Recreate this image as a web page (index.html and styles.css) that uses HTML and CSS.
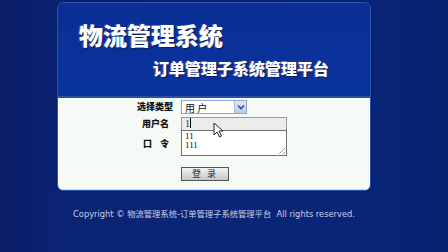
FILE: index.html
```html
<!DOCTYPE html>
<html lang="zh-CN">
<head>
    <meta charset="UTF-8">
    <title>物流管理系统 - 订单管理子系统管理平台</title>
    <link rel="stylesheet" href="styles.css">
</head>
<body>
    <div class="page">
        <div class="panel">
            <div class="banner">
                <div class="title">物流管理系统</div>
                <div class="subtitle">订单管理子系统管理平台</div>
            </div>

            <form class="login">
                <label class="label">选择类型</label>
                <div class="select">
                    <span class="select-text">用 户</span>
                    <span class="select-btn">
                        <svg width="8" height="6" viewBox="0 0 8 6"><path d="M1 1.5 L4 4.5 L7 1.5" fill="none" stroke="#2c4f98" stroke-width="1.6"/></svg>
                    </span>
                </div>

                <label class="label label-user">用户名</label>
                <div class="field">
                    <div class="input">1<span class="caret"></span></div>
                    <div class="suggest">
                        <div>11</div>
                        <div>111</div>
                        <span class="grip"></span>
                    </div>
                    <svg class="pointer" width="11" height="16" viewBox="0 0 11 16">
                        <path d="M1 1 L1 13 L4 10 L6.5 15 L8.5 14 L6 9 L10 9 Z" fill="#fff" stroke="#222" stroke-width="1"/>
                    </svg>
                </div>

                <label class="label label-pwd">口<span class="gap"></span>令</label>
                <div class="field-pwd"></div>

                <span></span>
                <button type="button" class="btn">登 录</button>
            </form>
        </div>

        <p class="copyright">Copyright © 物流管理系统-订单管理子系统管理平台&nbsp; All rights reserved.</p>
    </div>
</body>
</html>
```

FILE: styles.css
```css
* {
    margin: 0;
    padding: 0;
    box-sizing: border-box;
}

body {
    width: 448px;
    height: 252px;
    overflow: hidden;
    background: linear-gradient(90deg, #0a1d68 0%, #0b2474 14%, #0a2478 84%, #08226f 100%);
    font-family: "Noto Sans CJK SC", "DejaVu Sans", sans-serif;
}

.page {
    display: flex;
    flex-direction: column;
    align-items: center;
    padding-top: 2px;
}

.panel {
    width: 314px;
    margin-right: 20px;
    border: 1px solid #2e55b6;
    border-radius: 6px;
    overflow: hidden;
    box-shadow: 0 0 2px rgba(0,0,0,0.5);
}

.banner {
    height: 95px;
    background: linear-gradient(180deg, #0a2f97 0%, #0a339c 100%);
    border-bottom: 2px solid #2c4fa8;
    color: #fff;
    font-weight: 900;
    text-shadow: 1px 1px 1px #0a1d5a, -1px 0 1px #4d6fd0;
}

.title {
    font-size: 24px;
    line-height: 24px;
    padding: 20px 0 0 21px;
}

.subtitle {
    font-size: 16px;
    line-height: 16px;
    padding: 13px 0 0 95px;
}

.login {
    height: 92px;
    background: #f6faf7;
    display: grid;
    grid-template-columns: 117px 106px;
    grid-template-rows: 14px 14px 30px 14px;
    column-gap: 6px;
    row-gap: 3px;
    padding-top: 2px;
    border-bottom: 1px solid #d0d4d0;
}

.label {
    font-size: 9px;
    font-weight: 900;
    color: #111;
    text-align: right;
    line-height: 14px;
    padding-right: 2px;
}

.label-user {
    padding-right: 6px;
}

.label-pwd {
    align-self: start;
    margin-top: 3px;
    padding-right: 6px;
}

.label-pwd .gap {
    display: inline-block;
    width: 8px;
}

.select {
    width: 66px;
    height: 14px;
    border: 1px solid #8fa6cc;
    background: #fff;
    display: flex;
    align-items: center;
    justify-content: space-between;
}

.select-text {
    font-size: 10px;
    padding-left: 3px;
    color: #111;
}

.select-btn {
    width: 12px;
    height: 12px;
    background: linear-gradient(180deg, #dfe8f7, #b9cbea);
    border-left: 1px solid #a9bde0;
    display: flex;
    align-items: center;
    justify-content: center;
}

.field {
    position: relative;
}

.input {
    width: 106px;
    height: 14px;
    border: 1px solid #9a9a9a;
    background: #ececec;
    font-family: "Liberation Serif", serif;
    font-size: 10px;
    line-height: 12px;
    padding-left: 3px;
    color: #333;
}

.caret {
    display: inline-block;
    width: 1px;
    height: 10px;
    background: #000;
    vertical-align: -1px;
}

.suggest {
    position: absolute;
    left: 0;
    top: 13px;
    width: 106px;
    height: 26px;
    background: #fff;
    border: 1px solid #6f6f6f;
    font-family: "Liberation Serif", serif;
    font-size: 9px;
    line-height: 9px;
    padding: 1px 0 0 3px;
    color: #111;
    z-index: 2;
}

.grip {
    position: absolute;
    right: 1px;
    bottom: 1px;
    width: 9px;
    height: 9px;
    background: repeating-linear-gradient(135deg, transparent 0 2px, #9a9a9a 2px 3px);
    clip-path: polygon(100% 0, 100% 100%, 0 100%);
}

.pointer {
    position: absolute;
    left: 32px;
    top: 5px;
    z-index: 3;
}

.btn {
    grid-column: 2;
    width: 48px;
    height: 14px;
    border: 1px solid #555;
    background: linear-gradient(180deg, #f2f2f2, #c6c6c6);
    font-family: "Noto Sans CJK SC", sans-serif;
    font-size: 9px;
    line-height: 12px;
    color: #222;
    letter-spacing: 2px;
}

.copyright {
    margin-top: 16px;
    margin-right: 20px;
    font-family: "DejaVu Sans", "Noto Sans CJK SC", sans-serif;
    font-size: 8.3px;
    color: #c9d0e6;
}
```
